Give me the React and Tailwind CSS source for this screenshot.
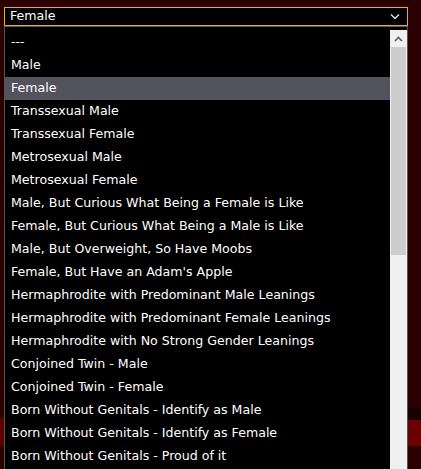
import React from "react";

const items = [
  "---",
  "Male",
  "Female",
  "Transsexual Male",
  "Transsexual Female",
  "Metrosexual Male",
  "Metrosexual Female",
  "Male, But Curious What Being a Female is Like",
  "Female, But Curious What Being a Male is Like",
  "Male, But Overweight, So Have Moobs",
  "Female, But Have an Adam's Apple",
  "Hermaphrodite with Predominant Male Leanings",
  "Hermaphrodite with Predominant Female Leanings",
  "Hermaphrodite with No Strong Gender Leanings",
  "Conjoined Twin - Male",
  "Conjoined Twin - Female",
  "Born Without Genitals - Identify as Male",
  "Born Without Genitals - Identify as Female",
  "Born Without Genitals - Proud of it",
];

export default function App() {
  return (
    <div
      className="relative w-[421px] h-[469px] overflow-hidden bg-[#2a0000] text-white"
      style={{ fontFamily: '"DejaVu Sans", Verdana, sans-serif' }}
    >
      <div className="absolute left-0 top-[418px] w-[4px] h-[28px] bg-[#5a0000]" />
      <div className="absolute left-[408px] top-[420px] w-[13px] h-[26px] bg-[#6a0000]" />
      <div className="absolute left-[408px] top-[407px] w-[13px] h-[13px] bg-[#1a0000]" />
      <div className="pt-[7px] pl-[4px] w-[408px]">
        <div className="h-[19px] border border-[#e8b400] bg-black flex items-center pl-[5px] pr-[6px]">
          <span className="flex-1 text-[12.6px] leading-none">Female</span>
          <svg width="10" height="7" viewBox="0 0 10 7" className="mr-[1px]">
            <path d="M1 1.5 L5 5.5 L9 1.5" stroke="#e6e6e6" strokeWidth="1.4" fill="none" />
          </svg>
        </div>
        <div className="relative h-[460px] border-x border-t border-[#555] bg-black flex">
          <div className="flex-1 pt-[4px]">
            {items.map((t, i) => (
              <div
                key={i}
                className={
                  "h-[23px] flex items-center pl-[6px] text-[12.6px] whitespace-nowrap " +
                  (i === 2 ? "bg-[#53535e]" : "")
                }
              >
                {t}
              </div>
            ))}
          </div>
          <div className="w-[17px] mt-[3px] bg-[#f0f0f0] flex flex-col">
            <div className="h-[17px] flex items-center justify-center">
              <svg width="9" height="6" viewBox="0 0 9 6">
                <path d="M1 5 L4.5 1.5 L8 5" stroke="#606060" strokeWidth="1.6" fill="none" />
              </svg>
            </div>
            <div className="mx-[1px] h-[208px] bg-[#cdcdcd]" />
          </div>
        </div>
      </div>
    </div>
  );
}
